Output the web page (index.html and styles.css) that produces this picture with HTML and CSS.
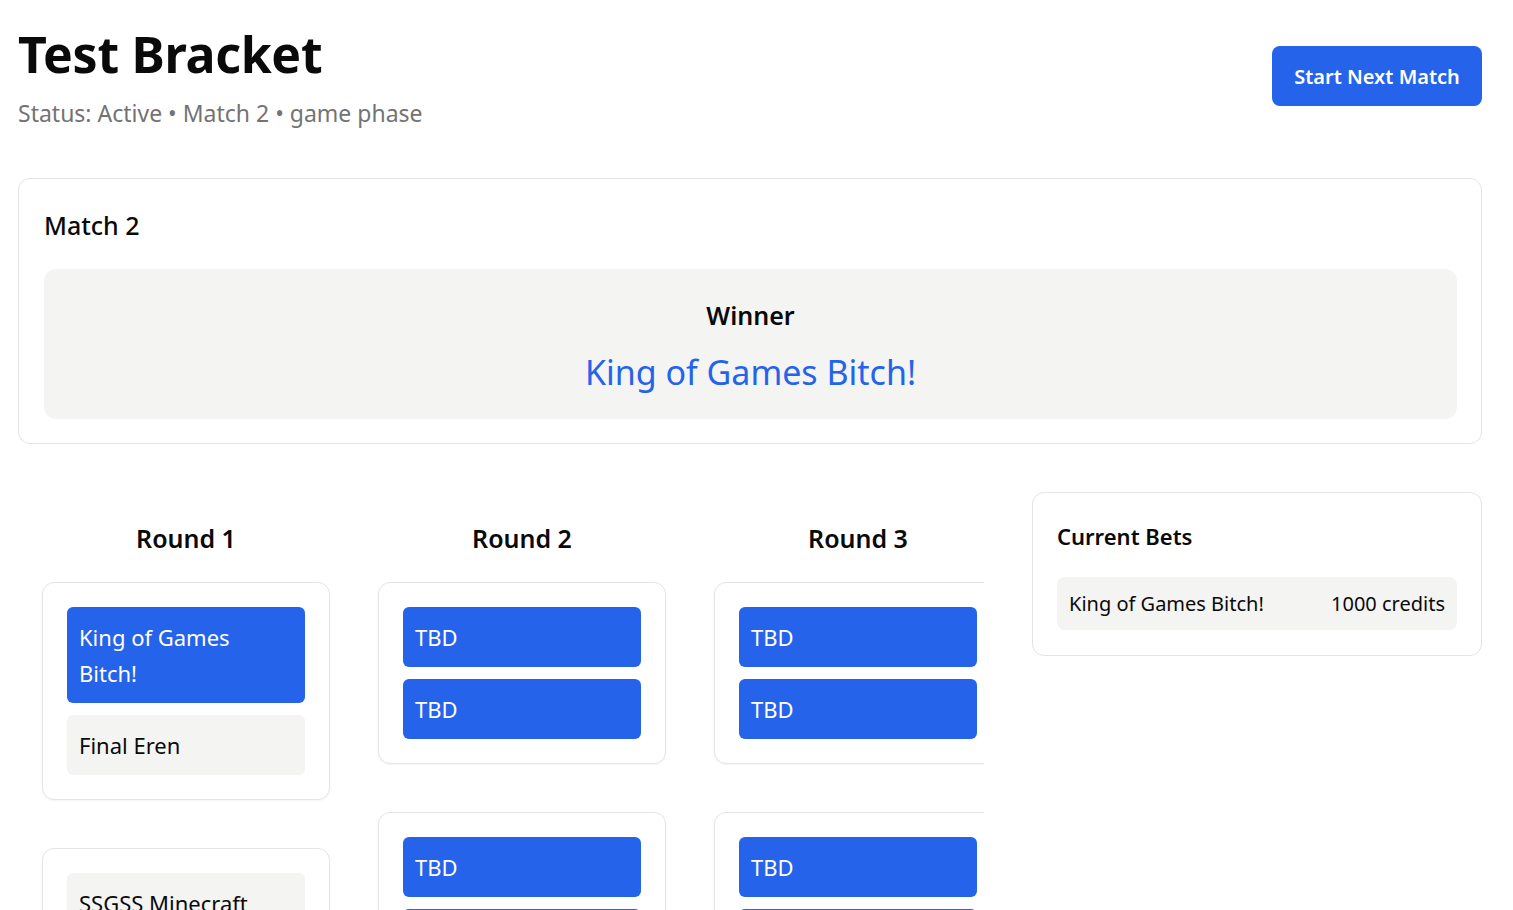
FILE: index.html
```html
<!DOCTYPE html>
<html lang="en">
<head>
<meta charset="utf-8">
<title>Test Bracket</title>
<link rel="stylesheet" href="styles.css">
</head>
<body>
<main class="page">
  <header class="top">
    <div class="titles">
      <h1 class="title">Test Bracket</h1>
      <p class="status">Status: Active • Match 2 • game phase</p>
    </div>
    <button class="btn-primary">Start Next Match</button>
  </header>

  <section class="card match-card">
    <h2 class="match-title">Match 2</h2>
    <div class="winner-box">
      <div class="winner-label">Winner</div>
      <div class="winner-name">King of Games Bitch!</div>
    </div>
  </section>

  <div class="lower">
    <div class="bracket">
      <div class="rounds">
        <div class="round">
          <h3 class="round-title">Round 1</h3>
          <div class="matches">
            <div class="card pair">
              <div class="player win">King of Games Bitch!</div>
              <div class="player">Final Eren</div>
            </div>
            <div class="card pair">
              <div class="player">SSGSS Minecraft</div>
              <div class="player">TBD</div>
            </div>
          </div>
        </div>
        <div class="round">
          <h3 class="round-title">Round 2</h3>
          <div class="matches">
            <div class="card pair">
              <div class="player win">TBD</div>
              <div class="player win">TBD</div>
            </div>
            <div class="card pair">
              <div class="player win">TBD</div>
              <div class="player win">TBD</div>
            </div>
          </div>
        </div>
        <div class="round">
          <h3 class="round-title">Round 3</h3>
          <div class="matches">
            <div class="card pair">
              <div class="player win">TBD</div>
              <div class="player win">TBD</div>
            </div>
            <div class="card pair">
              <div class="player win">TBD</div>
              <div class="player win">TBD</div>
            </div>
          </div>
        </div>
      </div>
    </div>

    <aside class="card bets">
      <h2 class="bets-title">Current Bets</h2>
      <div class="bet-row">
        <span>King of Games Bitch!</span>
        <span>1000 credits</span>
      </div>
    </aside>
  </div>
</main>
</body>
</html>
```
FILE: styles.css
```css
* { box-sizing: border-box; }
html, body { margin: 0; height: 100%; overflow: hidden; }
body {
  background: #ffffff;
  color: #0a0a0a;
  font-family: "Noto Sans", "Open Sans", "Liberation Sans", sans-serif;
}
.page {
  width: 1464px;
  margin-left: 18px;
  padding-top: 20px;
}
.top {
  display: flex;
  justify-content: space-between;
  align-items: flex-start;
}
.title {
  margin: 0;
  font-size: 50px;
  line-height: 68px;
  font-weight: 700;
  letter-spacing: -0.3px;
}
.status {
  margin: 9px 0 0;
  font-size: 23px;
  line-height: 32px;
  color: #737373;
}
.btn-primary {
  margin-top: 26px;
  width: 210px;
  height: 60px;
  border: none;
  border-radius: 8px;
  background: #2563eb;
  color: #fff;
  font-family: inherit;
  font-size: 20px;
  font-weight: 600;
}
.card {
  background: #fff;
  border: 1px solid #e4e4e4;
  border-radius: 12px;
}
.match-card {
  margin-top: 49px;
  padding: 24px 24px 24px 25px;
}
.match-title {
  margin: 0;
  font-size: 25px;
  line-height: 44px;
  font-weight: 500;
}
.winner-box {
  margin-top: 22px;
  background: #f4f4f3;
  border-radius: 12px;
  padding: 27px 20px 22px;
  text-align: center;
}
.winner-label {
  font-size: 25px;
  line-height: 38px;
  font-weight: 600;
}
.winner-name {
  margin-top: 13px;
  font-size: 34px;
  line-height: 50px;
  color: #2563eb;
}
.lower {
  margin-top: 48px;
  display: grid;
  grid-template-columns: 966px 450px;
  column-gap: 48px;
  align-items: start;
}
.bracket {
  overflow: hidden;
  padding: 29px 24px 24px;
}
.rounds {
  display: flex;
  gap: 48px;
  width: max-content;
}
.round { width: 288px; }
.round-title {
  margin: 0 0 27px;
  text-align: center;
  font-size: 25px;
  line-height: 34px;
  font-weight: 600;
}
.matches {
  display: flex;
  flex-direction: column;
  gap: 48px;
}
.pair {
  padding: 24px;
  display: flex;
  flex-direction: column;
  gap: 12px;
  box-shadow: 0 1px 2px rgba(0,0,0,0.04);
}
.player {
  background: #f4f4f3;
  border-radius: 6px;
  padding: 12px;
  font-size: 22px;
  line-height: 36px;
  color: #0a0a0a;
}
.player.win {
  background: #2563eb;
  color: #fff;
}
.bets { padding: 23px 24px 25px; }
.bets-title {
  margin: 0;
  font-size: 22px;
  line-height: 40px;
  font-weight: 600;
}
.bet-row {
  margin-top: 21px;
  background: #f4f4f3;
  border-radius: 8px;
  padding: 0 12px;
  height: 53px;
  display: flex;
  justify-content: space-between;
  align-items: center;
  font-size: 20px;
}
```
